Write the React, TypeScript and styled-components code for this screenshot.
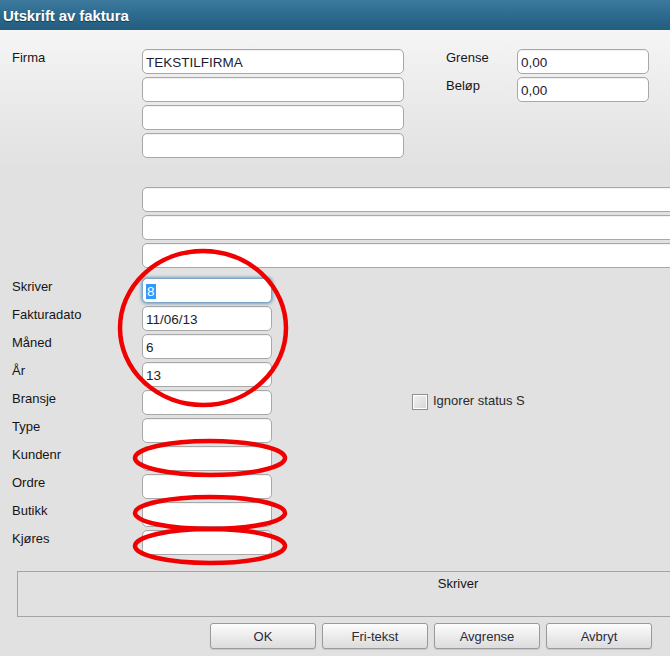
import React from 'react';
import styled, { createGlobalStyle } from 'styled-components';

const GlobalStyle = createGlobalStyle`
  html, body {
    margin: 0;
    padding: 0;
    background: #e1e1e1;
  }
  body {
    font-family: 'Liberation Sans', Arial, sans-serif;
  }
`;

const StyledWindow = styled.div`
  position: relative;
  width: 670px;
  height: 656px;
  overflow: hidden;
  background: linear-gradient(to bottom, #f5f5f5 30px, #e9e9e9 110px, #e1e1e1 170px, #e1e1e1 100%);
  font-family: 'Liberation Sans', Arial, sans-serif;
  font-size: 13px;
  color: #151515;
`;

const TitleBar = styled.div`
  height: 30px;
  display: flex;
  align-items: center;
  padding-left: 3px;
  background: linear-gradient(to bottom, #3d7a9e 0%, #2c6a8f 50%, #235d80 100%);
  color: #ffffff;
  font-size: 15px;
  font-weight: bold;
  text-shadow: 0 1px 1px rgba(0, 0, 0, 0.45);
  letter-spacing: -0.1px;
`;

const Content = styled.div`
  padding: 19px 0 0 12px;
`;

const TopSection = styled.div`
  display: flex;
  align-items: flex-start;
`;

const Label = styled.div<{ $width?: number }>`
  width: ${({ $width }) => $width ?? 130}px;
  flex-shrink: 0;
  line-height: 16px;
  padding-top: 1px;
  color: #151515;
`;

const Stack = styled.div`
  display: grid;
  grid-auto-rows: 28px;
`;

const Input = styled.div<{ $width: number; $focused?: boolean }>`
  box-sizing: border-box;
  width: ${({ $width }) => $width}px;
  height: 25px;
  background: #ffffff;
  border: 1px solid ${({ $focused }) => ($focused ? '#7fa6c6' : '#a8a8a8')};
  border-radius: 5px;
  box-shadow: ${({ $focused }) =>
    $focused ? '0 0 3px 1px rgba(90, 140, 185, 0.75)' : 'inset 0 1px 1px rgba(0,0,0,0.06)'};
  padding: 2px 4px 0 3px;
  display: flex;
  align-items: center;
  font-size: 13.5px;
  color: #1c1c30;
  white-space: nowrap;
`;

const Selected = styled.span`
  background: #3399ff;
  color: #ffffff;
  padding: 0 1px;
  line-height: 15px;
`;

const RightGroup = styled.div`
  margin-left: 42px;
  display: grid;
  grid-template-columns: 71px 132px;
  grid-auto-rows: 28px;
`;

const WideStack = styled.div`
  display: grid;
  grid-auto-rows: 28px;
  margin: 26px 0 0 130px;
`;

const FieldGrid = styled.div`
  display: grid;
  grid-template-columns: 130px 130px auto;
  grid-auto-rows: 28px;
  margin-top: 7px;
`;

const CheckWrap = styled.div`
  display: flex;
  align-items: flex-start;
  margin-left: 140px;
  padding-top: 3px;
  white-space: nowrap;
  color: #2a2a2a;
`;

const CheckBox = styled.div`
  box-sizing: border-box;
  width: 16px;
  height: 16px;
  margin-top: 1px;
  margin-right: 5px;
  border: 1px solid #8e8e8e;
  background: linear-gradient(135deg, #f2f2f2, #d6d6d6);
  box-shadow: inset 0 0 0 1px #ffffff;
`;

const InfoPanel = styled.div`
  box-sizing: border-box;
  width: 882px;
  height: 46px;
  margin: 13px 0 0 5px;
  border: 1px solid #a4a4a4;
  text-align: center;
  padding-top: 4px;
  line-height: 16px;
`;

const ButtonRow = styled.div`
  display: flex;
  gap: 6px;
  margin: 6px 0 0 198px;
`;

const Button = styled.div`
  box-sizing: border-box;
  width: 106px;
  height: 26px;
  display: flex;
  align-items: center;
  justify-content: center;
  border: 1px solid #9a9a9a;
  border-radius: 3px;
  background: linear-gradient(to bottom, #fdfdfd 0%, #ececec 50%, #dcdcdc 100%);
  box-shadow: 0 1px 1px rgba(0, 0, 0, 0.12);
  color: #2a2a3a;
  font-size: 13px;
`;

const Annotations = styled.svg`
  position: absolute;
  top: 0;
  left: 0;
  pointer-events: none;
`;

const fields = [
  { label: 'Skriver', value: '8', focused: true },
  { label: 'Fakturadato', value: '11/06/13' },
  { label: 'Måned', value: '6' },
  { label: 'År', value: '13' },
  { label: 'Bransje', value: '' },
  { label: 'Type', value: '' },
  { label: 'Kundenr', value: '' },
  { label: 'Ordre', value: '' },
  { label: 'Butikk', value: '' },
  { label: 'Kjøres', value: '' },
];

const App = () => {
  return (
    <>
      <GlobalStyle />
      <StyledWindow>
        <TitleBar>Utskrift av faktura</TitleBar>
        <Content>
          <TopSection>
            <Label>Firma</Label>
            <Stack>
              <Input $width={262}>TEKSTILFIRMA</Input>
              <Input $width={262} />
              <Input $width={262} />
              <Input $width={262} />
            </Stack>
            <RightGroup>
              <Label $width={71}>Grense</Label>
              <Input $width={132}>0,00</Input>
              <Label $width={71}>Beløp</Label>
              <Input $width={132}>0,00</Input>
            </RightGroup>
          </TopSection>

          <WideStack>
            <Input $width={540} />
            <Input $width={540} />
            <Input $width={540} />
          </WideStack>

          <FieldGrid>
            {fields.map((f) => (
              <React.Fragment key={f.label}>
                <Label>{f.label}</Label>
                <Input $width={130} $focused={f.focused}>
                  {f.focused ? <Selected>{f.value}</Selected> : f.value}
                </Input>
                {f.label === 'Bransje' ? (
                  <CheckWrap>
                    <CheckBox />
                    Ignorer status S
                  </CheckWrap>
                ) : (
                  <div />
                )}
              </React.Fragment>
            ))}
          </FieldGrid>

          <InfoPanel>Skriver</InfoPanel>

          <ButtonRow>
            <Button>OK</Button>
            <Button>Fri-tekst</Button>
            <Button>Avgrense</Button>
            <Button>Avbryt</Button>
          </ButtonRow>
        </Content>

        <Annotations width={670} height={656} viewBox="0 0 670 656">
          <g fill="none" stroke="#f00000" strokeWidth={4.5}>
            <ellipse cx={203} cy={328} rx={83} ry={77} />
            <ellipse cx={210} cy={458} rx={75} ry={17} />
            <ellipse cx={210} cy={513} rx={75} ry={16} />
            <ellipse cx={210} cy={546} rx={75} ry={17} />
          </g>
        </Annotations>
      </StyledWindow>
    </>
  );
};

export default App;
